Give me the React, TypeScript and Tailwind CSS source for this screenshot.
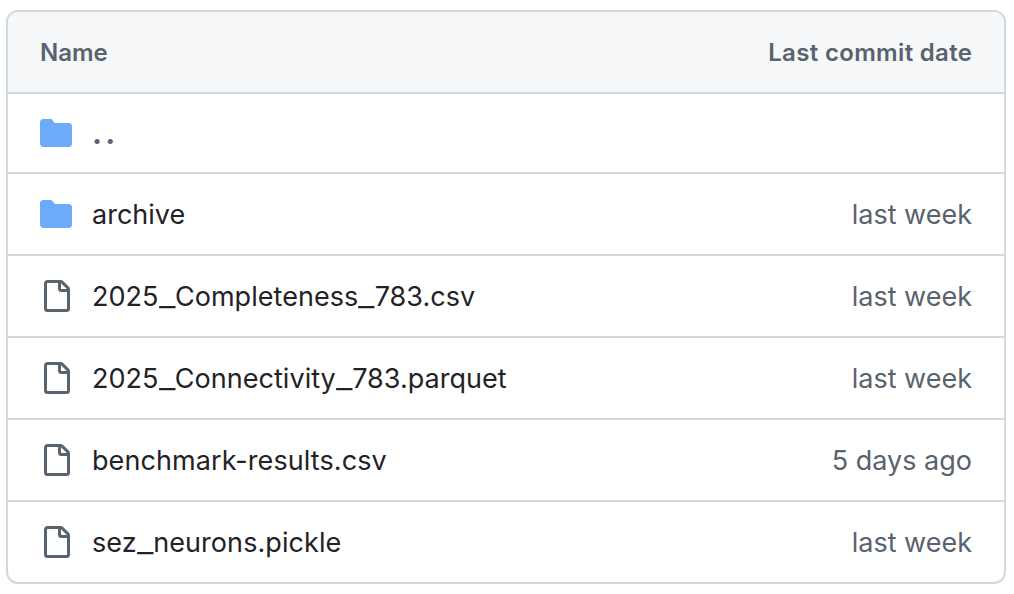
import { Fragment } from "react";

function Folder() {
  return (
    <svg viewBox="0 0 16 16" className="size-8 shrink-0" fill="#6cabf8">
      <path d="M1.75 1A1.75 1.75 0 0 0 0 2.75v10.5C0 14.216.784 15 1.75 15h12.5A1.75 1.75 0 0 0 16 13.25v-8.5A1.75 1.75 0 0 0 14.25 3H7.5a.25.25 0 0 1-.2-.1l-.9-1.2C6.07 1.26 5.55 1 5 1H1.75Z" />
    </svg>
  );
}

function File() {
  return (
    <svg viewBox="0 0 16 16" className="size-8 shrink-0" fill="#59636e">
      <path d="M2 1.75C2 .784 2.784 0 3.75 0h6.586c.464 0 .909.184 1.237.513l2.914 2.914c.329.328.513.773.513 1.237v9.586A1.75 1.75 0 0 1 13.25 16h-9.5A1.75 1.75 0 0 1 2 14.25Zm1.75-.25a.25.25 0 0 0-.25.25v12.5c0 .138.112.25.25.25h9.5a.25.25 0 0 0 .25-.25V6h-2.75A1.75 1.75 0 0 1 9 4.25V1.5Zm6.75.062V4.25c0 .138.112.25.25.25h2.688l-.011-.013-2.914-2.914-.013-.011Z" />
    </svg>
  );
}

const rows = [
  { name: "archive", date: "last week", folder: true, tracking: "" },
  { name: "2025_Completeness_783.csv", date: "last week", tracking: "tracking-[0.04px]" },
  { name: "2025_Connectivity_783.parquet", date: "last week", tracking: "tracking-[0.03px]" },
  { name: "benchmark-results.csv", date: "5 days ago", tracking: "tracking-[0.08px]" },
  { name: "sez_neurons.pickle", date: "last week", tracking: "tracking-[0.08px]" },
];

// Underscores are drawn wider than the typeface's own glyph.
function FileName({ name }: { name: string }) {
  return (
    <>
      {name.split("_").map((part, i) => (
        <Fragment key={i}>
          {i > 0 && (
            <span className="mr-1 inline-block origin-left scale-x-[1.33]">_</span>
          )}
          {part}
        </Fragment>
      ))}
    </>
  );
}

export default function App() {
  return (
    <div className="h-[594px] w-[1014px] bg-white pl-[6px] pt-[10px] font-[Inter,sans-serif] text-[#1f2328]">
      <div className="w-[1000px] overflow-hidden rounded-xl border-2 border-[#d1d9e0]">
        <div className="flex h-[80px] items-center justify-between bg-[#f6f8fa] px-8 pt-[2px] text-[24px] font-semibold text-[#59636e]">
          <span>Name</span>
          <span className="tracking-[0.33px] -mr-[0.33px]">Last commit date</span>
        </div>
        <div className="flex h-[80px] items-center gap-5 border-t-2 border-[#d1d9e0] px-8">
          <Folder />
          <span className="pt-[1px] text-[30px] font-bold tracking-[3.2px] text-[#59636e]">..</span>
        </div>
        {rows.map((r) => (
          <div key={r.name} className="flex h-[82px] items-center border-t-2 border-[#d1d9e0] px-8 text-[27px]">
            {r.folder ? <Folder /> : <File />}
            <span className={`ml-5 pt-[2px] ${r.tracking}`}>
              <FileName name={r.name} />
            </span>
            <span className="ml-auto pt-[2px] text-[#59636e]">{r.date}</span>
          </div>
        ))}
      </div>
    </div>
  );
}
